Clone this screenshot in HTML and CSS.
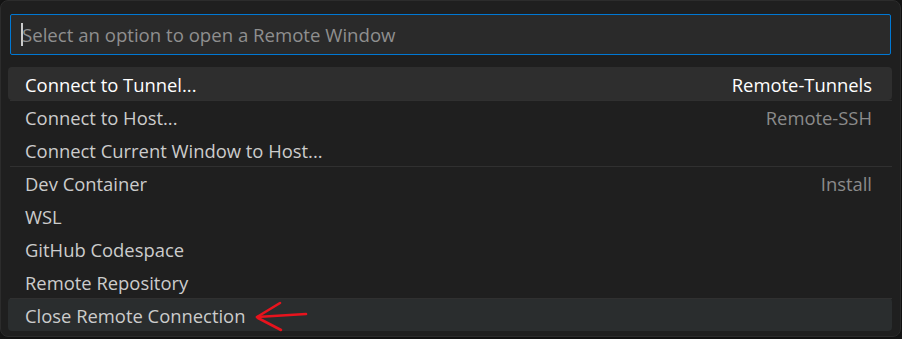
FILE: index.html
```html
<!DOCTYPE html>
<html lang="en">
<head>
    <meta charset="UTF-8">
    <title>Remote Window</title>
    <link rel="stylesheet" href="styles.css">
</head>
<body>

<div class="quick-input">
    <div class="input-box">
        <span class="caret"></span>
        <span class="placeholder">Select an option to open a Remote Window</span>
    </div>

    <div class="list">
        <div class="item focused">
            <span class="label">Connect to Tunnel...</span>
            <span class="detail">Remote-Tunnels</span>
        </div>
        <div class="item separator">
            <span class="label">Connect to Host...</span>
            <span class="detail">Remote-SSH</span>
        </div>
        <div class="item">
            <span class="label">Connect Current Window to Host...</span>
        </div>
        <div class="item separator">
            <span class="label">Dev Container</span>
            <span class="detail">Install</span>
        </div>
        <div class="item">
            <span class="label">WSL</span>
        </div>
        <div class="item">
            <span class="label">GitHub Codespace</span>
        </div>
        <div class="item">
            <span class="label">Remote Repository</span>
        </div>
        <div class="item hovered separator">
            <span class="label">Close Remote Connection</span>
            <svg class="arrow" width="56" height="32" viewBox="0 0 56 32">
                <path d="M3 16 L52 13" />
                <path d="M3 16 L26 2" />
                <path d="M4 17 L27 29" />
            </svg>
        </div>
    </div>
</div>

</body>
</html>
```

FILE: styles.css
```css
/* General Styles */
* {
    margin: 0;
    padding: 0;
    box-sizing: border-box;
}

body {
    width: 902px;
    height: 339px;
    overflow: hidden;
    background: #181818;
    font-family: 'Open Sans', 'Noto Sans', sans-serif;
}

.quick-input {
    width: 901px;
    height: 337px;
    padding: 13px 8px 0 7px;
    border: 1px solid #2c2c2c;
    border-radius: 8px;
    background: #1f1f1f;
    box-shadow: 0 0 8px rgba(0, 0, 0, 0.6);
}

.input-box {
    display: flex;
    align-items: center;
    height: 41px;
    margin: 0 1px 0 2px;
    padding-left: 10px;
    border: 1px solid #0078d4;
    border-radius: 2px;
    background: #2a2a2a;
}

.caret {
    width: 2px;
    height: 23px;
    margin-right: -1px;
    background: #cccccc;
}

.placeholder {
    font-size: 18.6px;
    color: #8f8f8f;
}

.list {
    margin-top: 12px;
}

.item {
    position: relative;
    display: flex;
    align-items: center;
    justify-content: space-between;
    height: 33px;
    padding: 1px 20px 0 17px;
    border-radius: 4px;
    font-size: 18.4px;
    color: #cccccc;
}

.item.separator::before {
    position: absolute;
    content: '';
    top: 0;
    left: 2px;
    right: 0;
    height: 1px;
    background: #303030;
}

.item.focused {
    background: #2e2e2e;
    color: #ffffff;
}

.item.hovered {
    background: #2a2d2e;
}

.detail {
    color: #8b8b8b;
}

.focused .detail {
    color: #ffffff;
}

.arrow {
    position: absolute;
    left: 246px;
    top: 3px;
}

.arrow path {
    fill: none;
    stroke: #e8131d;
    stroke-width: 2.6;
    stroke-linecap: round;
}
```
